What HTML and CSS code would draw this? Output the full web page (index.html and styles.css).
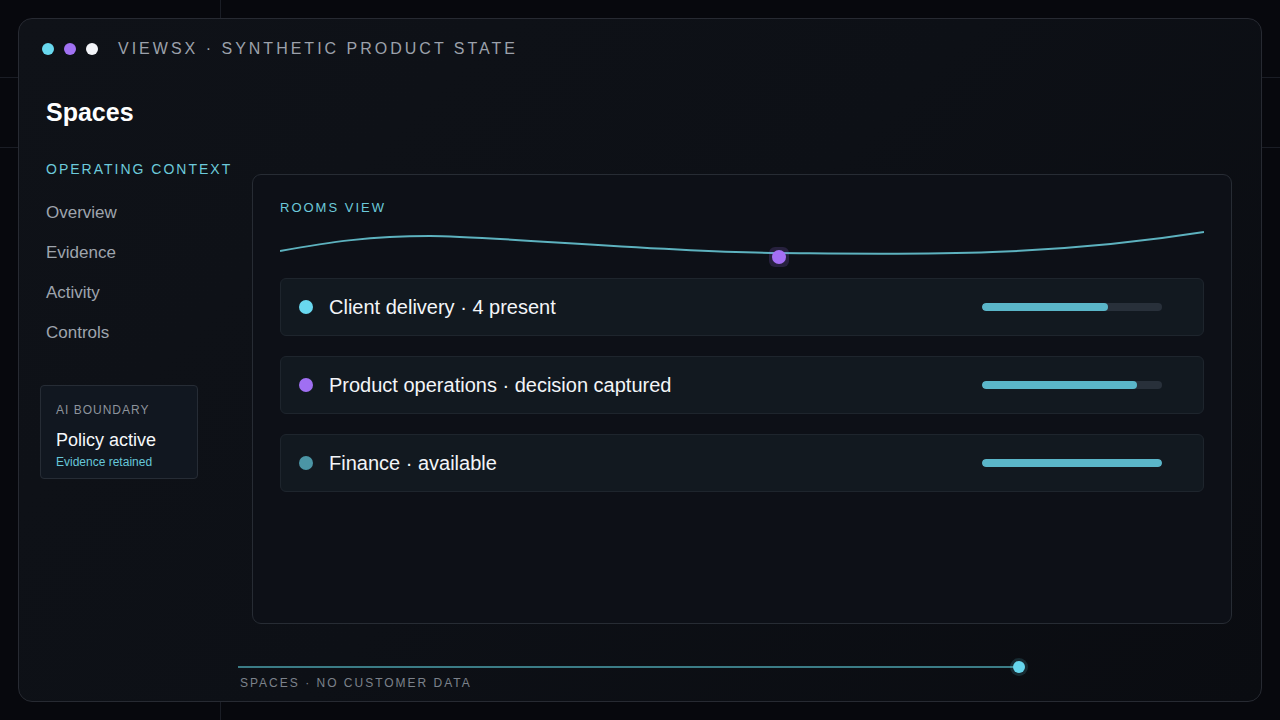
FILE: index.html
```html
<!DOCTYPE html>
<html lang="en">
<head>
    <meta charset="UTF-8">
    <meta name="viewport" content="width=device-width, initial-scale=1.0">
    <title>Spaces</title>
    <link rel="stylesheet" href="styles.css">
</head>
<body>
    <div class="backdrop">
        <span class="rule rule-v"></span>
        <span class="rule rule-h1"></span>
        <span class="rule rule-h2"></span>
    </div>

    <div class="frame">
        <header class="topbar">
            <span class="light light-cyan"></span>
            <span class="light light-purple"></span>
            <span class="light light-white"></span>
            <span class="brand">VIEWSX · SYNTHETIC PRODUCT STATE</span>
        </header>

        <h1 class="title">Spaces</h1>

        <div class="layout">
            <aside class="sidebar">
                <div class="eyebrow">OPERATING CONTEXT</div>
                <nav class="nav">
                    <a>Overview</a>
                    <a>Evidence</a>
                    <a>Activity</a>
                    <a>Controls</a>
                </nav>
                <div class="boundary">
                    <div class="boundary-label">AI BOUNDARY</div>
                    <div class="boundary-title">Policy active</div>
                    <div class="boundary-note">Evidence retained</div>
                </div>
            </aside>

            <main class="panel">
                <div class="panel-label">ROOMS VIEW</div>
                <svg class="wave" width="924" height="56" viewBox="0 0 924 56">
                    <path d="M0 29 C 50 20, 90 14, 150 14 S 380 30, 499 31 S 760 36, 924 10" fill="none" stroke="#5db2bf" stroke-width="2"/>
                    <rect x="489" y="25" width="20" height="20" rx="6" fill="#a06ef2" opacity="0.18"/>
                    <circle cx="499" cy="35" r="7" fill="#a46ff4"/>
                </svg>

                <div class="rooms">
                    <div class="room">
                        <span class="room-dot dot-cyan"></span>
                        <span class="room-name">Client delivery · 4 present</span>
                        <div class="meter"><div class="meter-fill" style="width: 70%"></div></div>
                    </div>
                    <div class="room">
                        <span class="room-dot dot-purple"></span>
                        <span class="room-name">Product operations · decision captured</span>
                        <div class="meter"><div class="meter-fill" style="width: 86%"></div></div>
                    </div>
                    <div class="room">
                        <span class="room-dot dot-teal"></span>
                        <span class="room-name">Finance · available</span>
                        <div class="meter"><div class="meter-fill" style="width: 100%"></div></div>
                    </div>
                </div>
            </main>
        </div>

        <footer class="footer">
            <div class="track">
                <span class="track-line"></span>
                <span class="track-dot"></span>
            </div>
            <div class="footer-text">SPACES · NO CUSTOMER DATA</div>
        </footer>
    </div>
</body>
</html>
```

FILE: styles.css
```css
body {
    margin: 0;
    height: 720px;
    overflow: hidden;
    position: relative;
    background: #07080d;
    font-family: "Liberation Sans", Arial, sans-serif;
    color: #f3f5f8;
}
.backdrop {
    position: absolute;
    inset: 0;
}
.rule {
    position: absolute;
    background: #1a1d25;
}
.rule-v {
    left: 220px;
    top: 0;
    width: 1px;
    height: 720px;
}
.rule-h1, .rule-h2 {
    left: 0;
    width: 1280px;
    height: 1px;
}
.rule-h1 { top: 77px; }
.rule-h2 { top: 147px; }

.frame {
    position: relative;
    margin: 18px;
    height: 684px;
    box-sizing: border-box;
    border: 1px solid #272a32;
    border-radius: 14px;
    background: linear-gradient(135deg, #0f1218 0%, #0d1016 50%, #0a0c11 100%);
    padding-left: 22px;
    display: flex;
    flex-direction: column;
}
.topbar {
    height: 24px;
    margin-top: 18px;
    padding-left: 1px;
    display: flex;
    align-items: center;
    gap: 10px;
}
.light {
    width: 12px;
    height: 12px;
    border-radius: 50%;
}
.light-cyan { background: #68d8ee; }
.light-purple { background: #a172f3; }
.light-white { background: #f3f5f9; }
.brand {
    margin-left: 10px;
    font-size: 16px;
    letter-spacing: 3px;
    color: #9ca1ab;
}
.title {
    margin: 36px 0 0 5px;
    font-size: 25px;
    line-height: 30px;
    font-weight: bold;
    color: #ffffff;
}
.layout {
    margin-top: 33px;
    display: grid;
    grid-template-columns: 211px 980px;
}
.sidebar {
    display: flex;
    flex-direction: column;
}
.eyebrow {
    margin-left: 5px;
    font-size: 14px;
    line-height: 18px;
    letter-spacing: 2px;
    color: #6ccadb;
    white-space: nowrap;
}
.nav {
    margin: 15px 0 0 5px;
    display: flex;
    flex-direction: column;
}
.nav a {
    font-size: 17px;
    line-height: 40px;
    color: #9ea4ad;
}
.boundary {
    margin: 32px 0 0 -1px;
    width: 158px;
    height: 94px;
    box-sizing: border-box;
    padding: 15px 15px 0;
    border: 1px solid #262c35;
    border-radius: 4px;
    background: #111720;
}
.boundary-label {
    font-size: 12px;
    line-height: 18px;
    letter-spacing: 1px;
    color: #8d939c;
}
.boundary-title {
    margin-top: 10px;
    font-size: 18px;
    line-height: 22px;
    color: #f5f7fa;
}
.boundary-note {
    margin-top: 3px;
    font-size: 12px;
    line-height: 16px;
    color: #66c6d8;
}
.panel {
    margin-top: 14px;
    height: 450px;
    box-sizing: border-box;
    padding: 25px 27px 0;
    border: 1px solid #272c34;
    border-radius: 9px;
    background: #0d1017;
}
.panel-label {
    font-size: 13px;
    line-height: 16px;
    letter-spacing: 2px;
    color: #6ccadb;
}
.wave {
    display: block;
    margin-top: 6px;
}
.rooms {
    display: flex;
    flex-direction: column;
    gap: 20px;
}
.room {
    height: 58px;
    box-sizing: border-box;
    padding: 0 41px 0 18px;
    border: 1px solid #1e252d;
    border-radius: 6px;
    background: #121920;
    display: flex;
    align-items: center;
}
.room-dot {
    width: 14px;
    height: 14px;
    border-radius: 50%;
    flex-shrink: 0;
}
.dot-cyan { background: #69d8ef; }
.dot-purple { background: #a06ff2; }
.dot-teal { background: #4b95a5; }
.room-name {
    margin-left: 16px;
    font-size: 20px;
    line-height: 22px;
    color: #f3f5f8;
}
.meter {
    margin-left: auto;
    width: 180px;
    height: 8px;
    border-radius: 4px;
    background: #28303a;
    overflow: hidden;
}
.meter-fill {
    height: 100%;
    border-radius: 4px;
    background: #5ab6c9;
}
.footer {
    margin: 37px 0 0 197px;
}
.track {
    height: 12px;
    display: flex;
    align-items: center;
}
.track-line {
    width: 781px;
    height: 2px;
    background: #3b7c86;
}
.track-dot {
    margin-left: -6px;
    width: 12px;
    height: 12px;
    border-radius: 50%;
    background: #66d6ee;
    box-shadow: 0 0 0 3px rgba(102, 214, 238, 0.15);
}
.footer-text {
    margin: 3px 0 0 2px;
    font-size: 12px;
    line-height: 14px;
    letter-spacing: 2px;
    color: #7c828b;
}
```
